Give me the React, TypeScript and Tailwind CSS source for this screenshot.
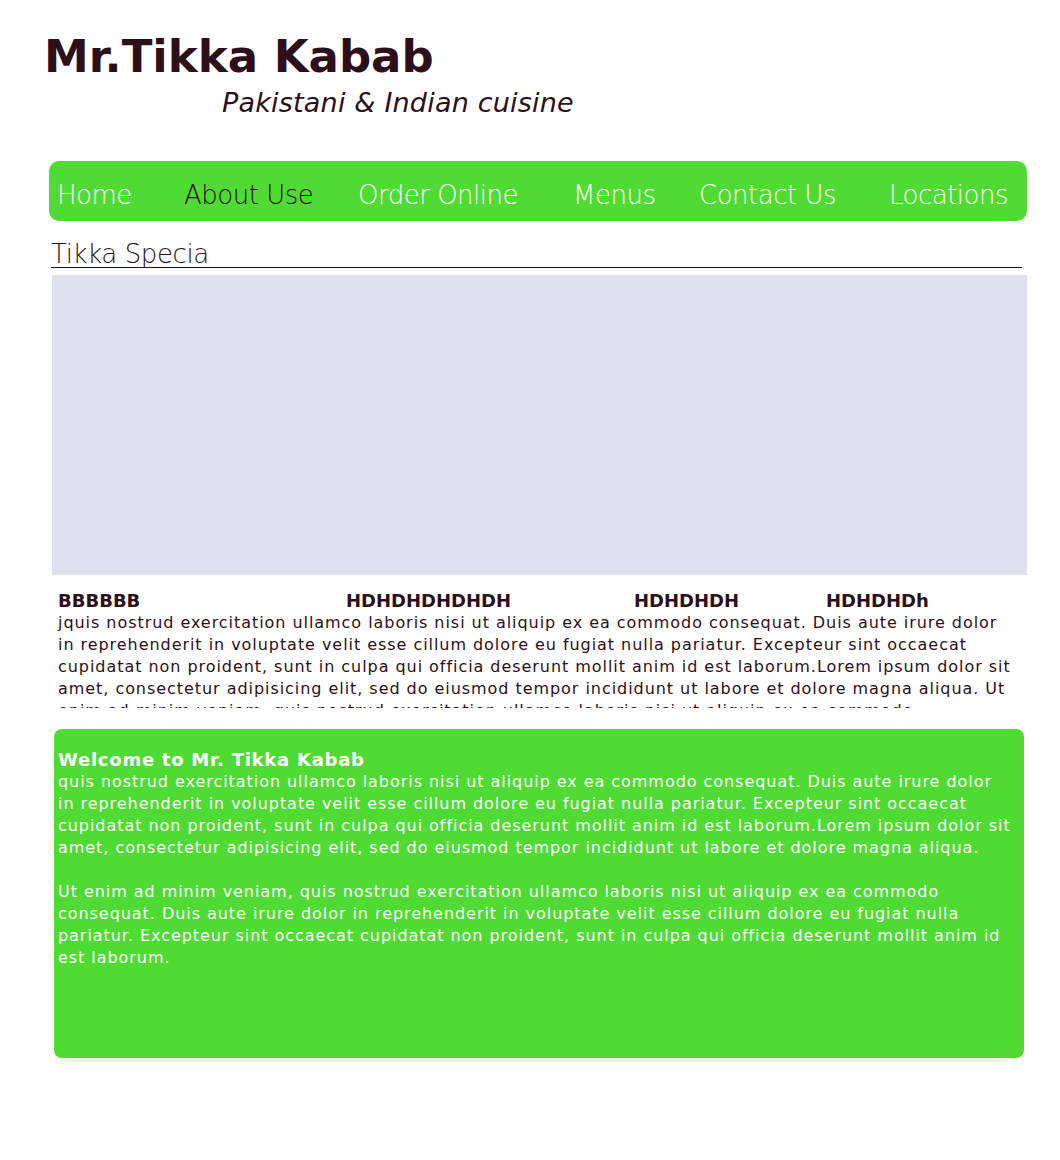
const navItems = [
  { label: "Home", width: "w-[127px]", active: false },
  { label: "About Use", width: "w-[174px]", active: true },
  { label: "Order Online", width: "w-[215px]", active: false },
  { label: "Menus", width: "w-[126px]", active: false },
  { label: "Contact Us", width: "w-[190px]", active: false },
  { label: "Locations", width: "", active: false },
];

const specials = [
  { name: "BBBBBB", width: "w-[288px]" },
  { name: "HDHDHDHDHDH", width: "w-[288px]" },
  { name: "HDHDHDH", width: "w-[192px]" },
  { name: "HDHDHDh", width: "" },
];

const lorem =
  "quis nostrud exercitation ullamco laboris nisi ut aliquip ex ea commodo consequat. Duis aute irure dolor in reprehenderit in voluptate velit esse cillum dolore eu fugiat nulla pariatur. Excepteur sint occaecat cupidatat non proident, sunt in culpa qui officia deserunt mollit anim id est laborum.Lorem ipsum dolor sit amet, consectetur adipisicing elit, sed do eiusmod tempor incididunt ut labore et dolore magna aliqua.";

const lorem2 =
  "Ut enim ad minim veniam, quis nostrud exercitation ullamco laboris nisi ut aliquip ex ea commodo consequat. Duis aute irure dolor in reprehenderit in voluptate velit esse cillum dolore eu fugiat nulla pariatur. Excepteur sint occaecat cupidatat non proident, sunt in culpa qui officia deserunt mollit anim id est laborum.";

export default function App() {
  return (
    <div className="min-h-[1160px] bg-white font-['DejaVu_Sans',sans-serif] text-[#2c0f18]">
      <header className="pl-[44px] pt-[31px]">
        <h1 className="text-[45px] font-bold leading-[52px]">Mr.Tikka Kabab</h1>
        <p className="ml-[178px] mt-[4px] text-[27px] italic leading-[31px] tracking-[0.2px]">
          Pakistani &amp; Indian cuisine
        </p>
      </header>

      <nav className="ml-[49px] mt-[43px] flex h-[60px] w-[978px] items-center rounded-[10px] bg-[#4fdb33] pl-[8px] pt-[8px] text-[26px] font-extralight tracking-[-0.5px] text-white">
        {navItems.map((item) => (
          <a
            key={item.label}
            href="#"
            className={`${item.width} ${item.active ? "text-[#2c0f18]" : ""}`}
          >
            {item.label}
          </a>
        ))}
      </nav>

      <h2 className="ml-[51px] mt-[21px] w-[971px] border-b border-[#2c0f18] text-[26px] font-extralight leading-[25px] tracking-[-0.4px]">
        Tikka Specia
      </h2>

      <div className="ml-[52px] mt-[7px] h-[300px] w-[975px] bg-[#e0e0ef]" />

      <section className="ml-[52px] h-[133px] w-[975px] overflow-hidden pl-[6px] pr-[11px] pt-[15px] text-[16px] leading-[22px] tracking-[0.95px]">
        <div className="flex text-[18px] font-bold tracking-normal">
          {specials.map((s) => (
            <span key={s.name} className={s.width}>
              {s.name}
            </span>
          ))}
        </div>
        <p>
          j{lorem} {lorem2}
        </p>
      </section>

      <section className="ml-[54px] mt-[21px] h-[329px] w-[970px] rounded-[8px] bg-[#4fdb33] pl-[4px] pr-[12px] pt-[20px] text-[16px] leading-[22px] tracking-[0.95px] text-white">
        <h3 className="text-[18px] font-bold tracking-[0.75px]">Welcome to Mr. Tikka Kabab</h3>
        <p>
          {lorem}
          <br />
          <br />
          {lorem2}
        </p>
      </section>
    </div>
  );
}
